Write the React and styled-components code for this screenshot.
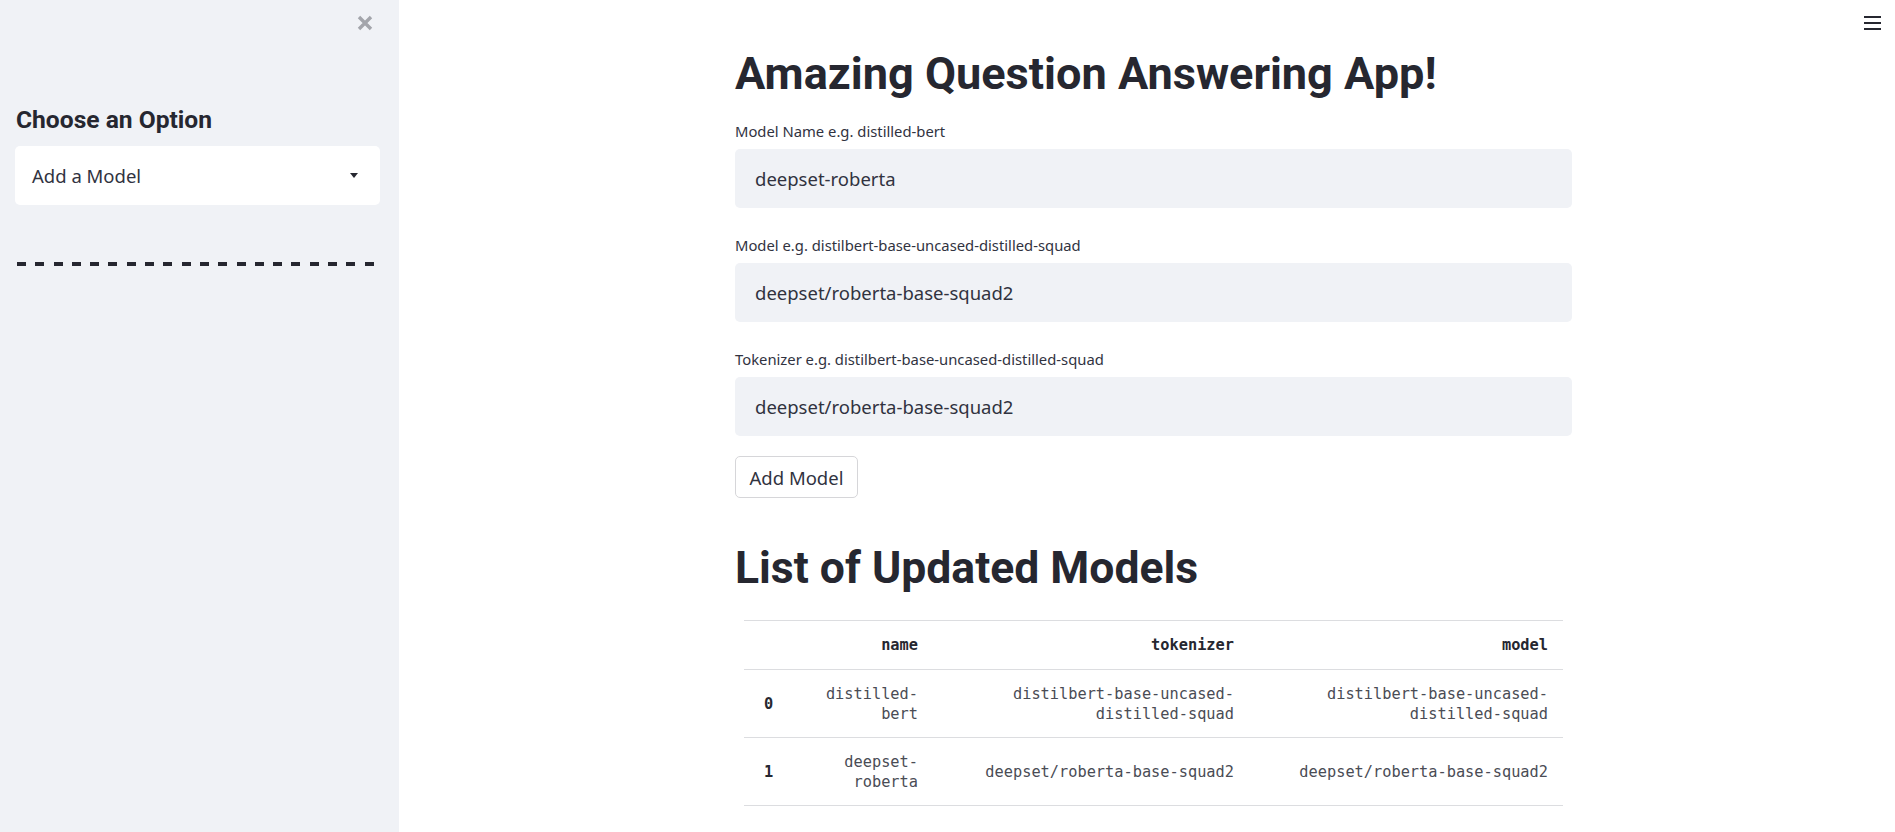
import React from 'react';
import styled, { createGlobalStyle } from 'styled-components';

const GlobalStyle = createGlobalStyle`
  html, body {
    margin: 0;
    padding: 0;
    background: #ffffff;
    font-family: "Noto Sans", "Open Sans", sans-serif;
    color: #262730;
  }
`;

const rows = [
  { index: '0', name: 'distilled-bert', tokenizer: 'distilbert-base-uncased-distilled-squad', model: 'distilbert-base-uncased-distilled-squad' },
  { index: '1', name: 'deepset-roberta', tokenizer: 'deepset/roberta-base-squad2', model: 'deepset/roberta-base-squad2' },
];

const fields = [
  { label: 'Model Name e.g. distilled-bert', value: 'deepset-roberta' },
  { label: 'Model e.g. distilbert-base-uncased-distilled-squad', value: 'deepset/roberta-base-squad2' },
  { label: 'Tokenizer e.g. distilbert-base-uncased-distilled-squad', value: 'deepset/roberta-base-squad2' },
];

function App() {
  return (
    <>
      <GlobalStyle />
      <Layout>
        <Sidebar>
          <CloseRow>
            <CloseButton aria-label="Close sidebar">
              <svg width="16" height="16" viewBox="0 0 16 16">
                <path d="M2 2 L14 14 M14 2 L2 14" stroke="#a3a5ab" strokeWidth="3.4" strokeLinecap="butt" />
              </svg>
            </CloseButton>
          </CloseRow>
          <SideHeading>Choose an Option</SideHeading>
          <Select>
            <span>Add a Model</span>
            <Caret />
          </Select>
          <Dashes />
        </Sidebar>

        <Main>
          <Menu aria-label="Menu">
            <span />
            <span />
            <span />
          </Menu>
          <Content>
            <Title>Amazing Question Answering App!</Title>
            {fields.map((f) => (
              <Field key={f.label}>
                <Label>{f.label}</Label>
                <TextInput>{f.value}</TextInput>
              </Field>
            ))}
            <Button>Add Model</Button>
            <SubTitle>List of Updated Models</SubTitle>
            <Table>
              <colgroup>
                <col style={{ width: 46 }} />
                <col style={{ width: 143 }} />
                <col style={{ width: 316 }} />
                <col style={{ width: 314 }} />
              </colgroup>
              <thead>
                <tr>
                  <HeadCell />
                  <HeadCell>name</HeadCell>
                  <HeadCell>tokenizer</HeadCell>
                  <HeadCell>model</HeadCell>
                </tr>
              </thead>
              <tbody>
                {rows.map((r) => (
                  <tr key={r.index}>
                    <IndexCell>{r.index}</IndexCell>
                    <Cell>{r.name}</Cell>
                    <Cell>{r.tokenizer}</Cell>
                    <Cell>{r.model}</Cell>
                  </tr>
                ))}
              </tbody>
            </Table>
          </Content>
        </Main>
      </Layout>
    </>
  );
}

export default App;

const Layout = styled.div`
  display: flex;
  min-height: 832px;
`;

const Sidebar = styled.aside`
  width: 399px;
  flex-shrink: 0;
  background: #f0f2f6;
  padding: 15px 19px 0 15px;
  box-sizing: border-box;
  display: flex;
  flex-direction: column;
`;

const CloseRow = styled.div`
  display: flex;
  justify-content: flex-end;
  padding-right: 7px;
`;

const CloseButton = styled.div`
  width: 16px;
  height: 16px;
  display: flex;
`;

const SideHeading = styled.h3`
  margin: 74px 0 0 1px;
  font-family: Roboto, "Noto Sans", sans-serif;
  font-size: 24.6px;
  line-height: 30px;
  font-weight: 700;
  color: #262730;
`;

const Select = styled.div`
  margin-top: 11px;
  height: 59px;
  background: #ffffff;
  border-radius: 5px;
  display: flex;
  align-items: center;
  justify-content: space-between;
  padding: 0 22px 0 17px;
  font-size: 18.5px;
  color: #31333f;
`;

const Caret = styled.span`
  width: 0;
  height: 0;
  border-left: 4.5px solid transparent;
  border-right: 4.5px solid transparent;
  border-top: 5px solid #262730;
`;

const Dashes = styled.div`
  margin: 57px 5px 0 2px;
  height: 4px;
  background: repeating-linear-gradient(
    to right,
    #262730 0,
    #262730 9px,
    transparent 9px,
    transparent 18.3px
  );
`;

const Main = styled.main`
  flex: 1;
  position: relative;
  padding: 46px 0 40px 336px;
`;

const Menu = styled.div`
  position: absolute;
  top: 16px;
  right: 14px;
  width: 17px;
  display: flex;
  flex-direction: column;
  gap: 4px;

  span {
    height: 2px;
    background: #262730;
  }
`;

const Content = styled.div`
  width: 837px;
  display: flex;
  flex-direction: column;
  align-items: flex-start;
`;

const Title = styled.h1`
  margin: 0 0 20px;
  font-family: Roboto, "Noto Sans", sans-serif;
  font-size: 45.1px;
  line-height: 55px;
  font-weight: 700;
  color: #262730;
`;

const Field = styled.div`
  align-self: stretch;
  display: flex;
  flex-direction: column;
  gap: 8px;
  margin-bottom: 27px;
`;

const Label = styled.label`
  font-size: 14.8px;
  line-height: 20px;
  color: #31333f;
`;

const TextInput = styled.div`
  height: 59px;
  box-sizing: border-box;
  background: #f0f2f6;
  border-radius: 5px;
  display: flex;
  align-items: center;
  padding: 0 20px;
  font-size: 18.5px;
  color: #31333f;
`;

const Button = styled.button`
  margin-top: -7px;
  width: 123px;
  height: 42px;
  background: #ffffff;
  border: 1px solid #d6d6d9;
  border-radius: 5px;
  font-family: inherit;
  font-size: 18.5px;
  color: #31333f;
  padding: 0;
`;

const SubTitle = styled.h2`
  margin: 45px 0 27px;
  font-family: Roboto, "Noto Sans", sans-serif;
  font-size: 44.5px;
  line-height: 50px;
  font-weight: 700;
  color: #262730;
`;

const Table = styled.table`
  margin-left: 9px;
  width: 819px;
  table-layout: fixed;
  border-collapse: collapse;
  border-top: 1px solid #dcdde0;
  font-family: "DejaVu Sans Mono", "Liberation Mono", monospace;
  font-size: 15.3px;
  line-height: 20px;
`;

const HeadCell = styled.th`
  padding: 14px 15px;
  text-align: right;
  font-weight: 600;
  color: #262730;
  border-bottom: 1px solid #dcdde0;
`;

const IndexCell = styled.th`
  padding: 13.5px 0 13.5px 20px;
  text-align: left;
  font-weight: 600;
  color: #262730;
  border-bottom: 1px solid #dcdde0;
`;

const Cell = styled.td`
  padding: 13.5px 15px;
  text-align: right;
  vertical-align: middle;
  color: #4a4c55;
  border-bottom: 1px solid #dcdde0;
`;
